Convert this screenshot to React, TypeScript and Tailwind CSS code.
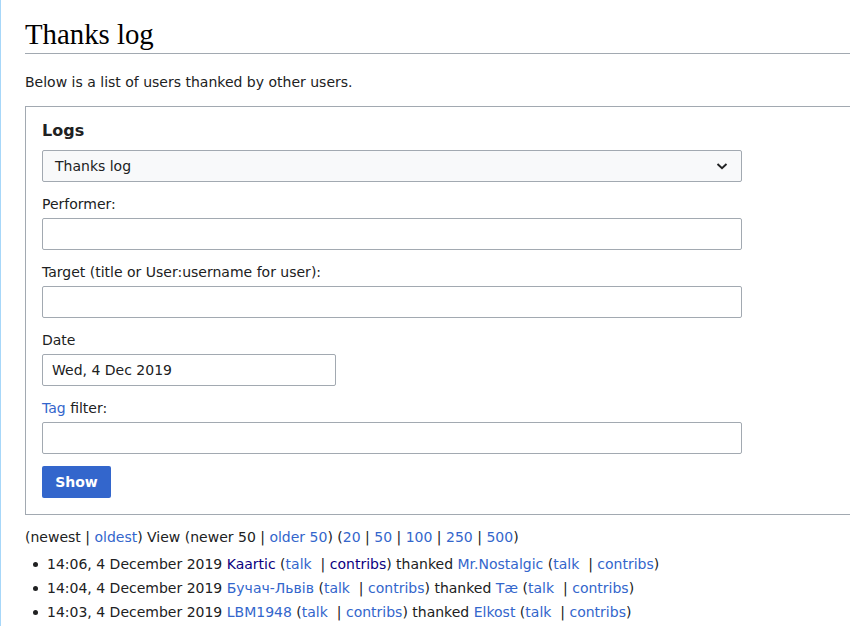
import React from 'react';

const link = 'text-[#36c]';
const visited = 'text-[#0b0080]';

function Field({ label, wide = true, value = '' }: { label: React.ReactNode; wide?: boolean; value?: string }) {
  return (
    <div className="mt-[11px]">
      <div className="leading-[22px]">{label}</div>
      <div
        className={`mt-[3px] h-[32px] ${wide ? 'w-[700px]' : 'w-[294px]'} border border-[#a2a9b1] rounded-[2px] bg-white px-[9px] flex items-center`}
      >
        {value}
      </div>
    </div>
  );
}

function UserLinks({ name, nameVisited, contribsVisited }: { name: string; nameVisited?: boolean; contribsVisited?: boolean }) {
  return (
    <>
      <a className={nameVisited ? visited : link}>{name}</a> (<a className={link}>talk</a>
      {'\u00a0 | '}
      <a className={contribsVisited ? visited : link}>contribs</a>)
    </>
  );
}

const rows = [
  { time: '14:06, 4 December 2019', from: 'Kaartic', fromVisited: true, contribsVisited: true, to: 'Mr.Nostalgic' },
  { time: '14:04, 4 December 2019', from: 'Бучач-Львів', to: 'Tæ' },
  { time: '14:03, 4 December 2019', from: 'LBM1948', to: 'Elkost' },
];

export default function App() {
  return (
    <div className="w-[850px] h-[626px] overflow-hidden bg-white">
      <div
        className="min-h-[626px] border-l border-[#a7d7f9] pl-[24px] pt-[16px] text-[14px] text-[#202122]"
        style={{ fontFamily: '"DejaVu Sans", sans-serif' }}
      >
        <h1
          className="text-[28.8px] leading-[37px] text-black border-b border-[#a2a9b1] mr-[-4px]"
          style={{ fontFamily: '"Liberation Serif", serif' }}
        >
          Thanks log
        </h1>
        <p className="mt-[17px] leading-[22px]">Below is a list of users thanked by other users.</p>

        <div className="mt-[13px] border border-[#a2a9b1] mr-[-4px] pl-[16px] pt-[14px] pb-[16px]">
          <div className="text-[16px] font-bold leading-[20px]">Logs</div>
          <div className="mt-[9px] h-[32px] w-[700px] border border-[#a2a9b1] rounded-[2px] bg-[#f8f9fa] pl-[12px] pr-[11px] flex items-center justify-between">
            <span>Thanks log</span>
            <svg width="12" height="12" viewBox="0 0 12 12" className="mr-[2px]">
              <path d="M1.5 4 L6 8.2 L10.5 4" fill="none" stroke="#202122" strokeWidth="1.9" />
            </svg>
          </div>
          <Field label="Performer:" />
          <Field label="Target (title or User:username for user):" />
          <Field label="Date" wide={false} value="Wed, 4 Dec 2019" />
          <Field
            label={
              <>
                <a className={link}>Tag</a> filter:
              </>
            }
          />
          <button className="mt-[12px] h-[32px] w-[69px] rounded-[2px] bg-[#36c] text-white font-bold flex items-center justify-center">
            Show
          </button>
        </div>

        <div className="mt-[11px] leading-[22px]">
          (newest | <a className={link}>oldest</a>) View (newer 50 | <a className={link}>older 50</a>) (
          <a className={link}>20</a> | <a className={link}>50</a> | <a className={link}>100</a> |{' '}
          <a className={link}>250</a> | <a className={link}>500</a>)
        </div>

        <ul className="mt-[4px]">
          {rows.map((r) => (
            <li key={r.time + r.from} className="flex items-center h-[24px] leading-[22px]">
              <span className="ml-[8px] mr-[9px] w-[5px] h-[5px] rounded-full bg-[#202122] shrink-0" />
              <span className="whitespace-nowrap">
                {r.time} <UserLinks name={r.from} nameVisited={r.fromVisited} contribsVisited={r.contribsVisited} /> thanked{' '}
                <UserLinks name={r.to} />
              </span>
            </li>
          ))}
        </ul>
      </div>
    </div>
  );
}
